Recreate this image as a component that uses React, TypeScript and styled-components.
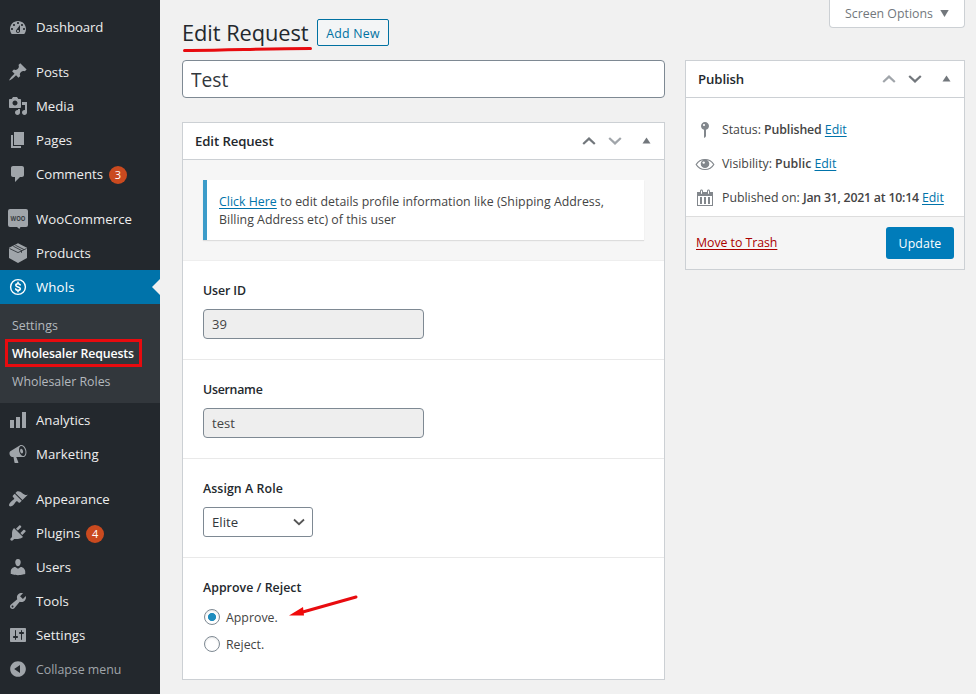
import React, { useState } from 'react';
import styled, { createGlobalStyle, css } from 'styled-components';

const GlobalStyle = createGlobalStyle`
  * { box-sizing: border-box; }
  body {
    margin: 0;
    background: #f1f1f1;
    color: #444;
    font: 12.35px/18px "Open Sans", "Noto Sans", sans-serif;
  }
  input, select, button { font: inherit; color: inherit; margin: 0; }
  a { color: #0073aa; text-decoration: underline; text-underline-offset: 1.5px; }
`;

const Page = styled.div`
  position: relative;
  display: flex;
  width: 976px;
  height: 694px;
  overflow: hidden;
`;

/* ---------- admin menu ---------- */

const Menu = styled.nav`
  width: 160px;
  flex: none;
  padding-top: 10px;
  background: #23282d;
`;

const MenuItem = styled.a<{ $active?: boolean; $gap?: boolean; $muted?: boolean }>`
  display: flex;
  align-items: center;
  height: 34px;
  margin-top: ${(p) => (p.$gap ? 11 : 0)}px;
  padding-left: 8px;
  color: ${(p) => (p.$muted ? '#a0a5aa' : '#eee')};
  background: ${(p) => (p.$active ? '#0073aa' : 'transparent')};
  font-size: ${(p) => (p.$muted ? 12.35 : 13.2)}px;
  text-decoration: none;
  svg {
    flex: none;
    margin-right: 8px;
    fill: ${(p) => (p.$active ? '#fff' : '#a0a5aa')};
  }
  ${(p) =>
    p.$active &&
    css`
      color: #fff;
      &::after {
        content: '';
        margin-left: auto;
        border: 8px solid transparent;
        border-right-color: #f1f1f1;
      }
    `}
`;

const Label = styled.span<{ $spacing?: number; $drop?: number }>`
  padding-top: ${(p) => p.$drop ?? 0}px;
  letter-spacing: ${(p) => p.$spacing ?? 0}px;
`;

const Badge = styled.span`
  width: 18px;
  height: 18px;
  margin: 1px 0 0 6px;
  border-radius: 9px;
  background: #ca4a1f;
  color: #fff;
  font-size: 11px;
  line-height: 18px;
  text-align: center;
`;

const SubMenu = styled.div`
  height: 99px;
  padding: 7px 5px;
  background: #32373c;
`;

const SubItem = styled.a<{ $current?: boolean }>`
  display: flex;
  align-items: center;
  width: 137px;
  height: 28px;
  padding: 2px 0 0 7px;
  color: #b4b9be;
  text-decoration: none;
  white-space: nowrap;
  ${(p) =>
    p.$current &&
    css`
      color: #fff;
      font-weight: 600;
      padding-left: 4px;
      border: 3px solid #e80b0f;
      letter-spacing: -0.13px;
    `}
`;

/* ---------- content ---------- */

const Content = styled.main`
  display: flex;
  flex: 1;
  padding-left: 22px;
`;

const Primary = styled.div`
  width: 483px;
  margin-right: 20px;
`;

const Secondary = styled.aside`
  width: 280px;
`;

const Heading = styled.header`
  display: flex;
  height: 60px;
  padding-top: 19px;
`;

const Title = styled.h1`
  margin: 0 9px 0 0;
  width: 126px;
  color: #23282d;
  font-size: 21.8px;
  font-weight: 400;
  line-height: 28px;
  white-space: nowrap;
  letter-spacing: -0.05px;
`;

const AddNew = styled.button`
  width: 72px;
  height: 27px;
  padding: 2px 0 0;
  border: 1px solid #0071a1;
  border-radius: 2px;
  background: #f3f5f6;
  color: #0071a1;
  font-weight: 500;
  line-height: 23px;
  letter-spacing: 0.2px;
`;

const TitleInput = styled.input`
  display: block;
  width: 100%;
  height: 38px;
  padding: 3px 8px;
  border: 1px solid #7e8993;
  border-radius: 4px;
  background: #fff;
  color: #32373c;
  font-size: 19.2px;
  outline: none;
`;

const Panel = styled.section<{ $top?: number }>`
  margin-top: ${(p) => p.$top ?? 0}px;
  border: 1px solid #ccd0d4;
  background: #fff;
`;

const PanelHead = styled.div`
  display: flex;
  align-items: center;
  height: 37px;
  padding: 0 12px;
  border-bottom: 1px solid #ccd0d4;
`;

const PanelTitle = styled.h2`
  margin: 0 auto 0 0;
  color: #23282d;
  font-size: 13.2px;
  font-weight: 600;
  letter-spacing: -0.1px;
`;

const Notice = styled.div`
  height: 101px;
  padding: 20px;
  border-bottom: 1px solid #eee;
  background: #f6f6f6;
`;

const NoticeCard = styled.p`
  height: 60px;
  margin: 0;
  padding: 13px 0 0 12px;
  border-left: 4px solid #3c9cc9;
  background: #fff;
  box-shadow: 0 1px 1px rgba(0, 0, 0, 0.1);
  white-space: nowrap;
  letter-spacing: 0.02px;
`;

const Field = styled.div<{ $last?: boolean }>`
  height: ${(p) => (p.$last ? 121 : 99)}px;
  padding: 20px;
  border-bottom: ${(p) => (p.$last ? 'none' : '1px solid #e9e9e9')};
`;

const FieldLabel = styled.div<{ $spacing?: number }>`
  height: 28px;
  padding-top: 1px;
  color: #23282d;
  font-weight: 600;
  letter-spacing: ${(p) => p.$spacing ?? 0.02}px;
`;

const ReadOnly = styled.input`
  display: block;
  width: 221px;
  height: 30px;
  padding: 0 8px;
  border: 1px solid #7e8993;
  border-radius: 4px;
  background: #eee;
  color: #444;
  font-size: 13px;
  outline: none;
`;

const SelectBox = styled.button`
  display: flex;
  align-items: center;
  justify-content: space-between;
  width: 110px;
  height: 30px;
  padding: 0 7px 0 8px;
  border: 1px solid #7e8993;
  border-radius: 3px;
  background: #fff;
  color: #32373c;
  font-size: 13.2px;
`;

const Choices = styled.div`
  margin-top: -3px;
`;

const Choice = styled.label`
  display: flex;
  align-items: center;
  height: 27px;
  padding-left: 1px;
`;

const Radio = styled.input`
  appearance: none;
  width: 16px;
  height: 16px;
  margin: 0 6px 0 0;
  border: 1px solid #7e8993;
  border-radius: 50%;
  background: #fff;
  box-shadow: inset 0 1px 2px rgba(0, 0, 0, 0.1);
  &:checked {
    background: radial-gradient(circle, #1e8cbe 0 3.7px, #fff 4.4px);
  }
`;

const ScreenOptions = styled.button`
  display: flex;
  justify-content: space-between;
  width: 136px;
  height: 28px;
  margin: 0 0 32px auto;
  padding: 5px 15px 0;
  border: 1px solid #ccd0d4;
  border-top: 0;
  border-radius: 0 0 4px 4px;
  background: #fff;
  color: #72777c;
  line-height: 18px;
  svg { margin-top: 5px; }
`;

const Details = styled.div`
  height: 118px;
  padding: 15px 9px 0;
`;

const Detail = styled.div`
  display: flex;
  align-items: center;
  height: 34px;
  svg { flex: none; margin-right: 7px; fill: #82878c; }
  b { font-weight: 600; }
`;

const DetailText = styled.span<{ $spacing?: number }>`
  white-space: nowrap;
  letter-spacing: -0.03px;
  b { letter-spacing: ${(p) => p.$spacing ?? -0.12}px; }
`;

const PublishFoot = styled.div`
  display: flex;
  align-items: center;
  justify-content: space-between;
  height: 53px;
  padding: 0 10px;
  border-top: 1px solid #ddd;
  background: #f5f5f5;
`;

const TrashLink = styled.a`
  color: #a00;
  letter-spacing: -0.05px;
`;

const UpdateButton = styled.button`
  width: 68px;
  height: 32px;
  padding: 1px 0 0;
  border: 0;
  border-radius: 3px;
  background: #007cba;
  color: #fff;
  letter-spacing: 0.08px;
`;

const Annotations = styled.svg`
  position: absolute;
  inset: 0;
  pointer-events: none;
`;

/* ---------- icons ---------- */

const paths = {
  dashboard:
    'M3.76 17h12.48c1.1-1.37 1.76-3.11 1.76-5 0-4.42-3.58-8-8-8s-8 3.58-8 8c0 1.89.66 3.63 1.76 5zM10 5c.55 0 1 .45 1 1s-.45 1-1 1-1-.45-1-1 .45-1 1-1zM6 7c.55 0 1 .45 1 1s-.45 1-1 1-1-.45-1-1 .45-1 1-1zm8 0c.55 0 1 .45 1 1s-.45 1-1 1-1-.45-1-1 .45-1 1-1zm-5.37 5.55L12 8v6c0 1.1-.9 2-2 2s-2-.9-2-2c0-.57.24-1.08.63-1.45zM4 11c.55 0 1 .45 1 1s-.45 1-1 1-1-.45-1-1 .45-1 1-1zm12 0c.55 0 1 .45 1 1s-.45 1-1 1-1-.45-1-1 .45-1 1-1zm-5 3c0-.55-.45-1-1-1s-1 .45-1 1 .45 1 1 1 1-.45 1-1z',
  posts:
    'M10.44 3.02l1.82-1.82 6.36 6.35-1.83 1.82c-1.05-.68-2.48-.57-3.41.36l-.75.75c-.92.93-1.04 2.35-.35 3.41l-1.83 1.82-2.41-2.41-2.8 2.79c-.42.42-3.38 2.71-3.8 2.29s1.86-3.39 2.28-3.81l2.79-2.79L4.1 9.36l1.83-1.82c1.05.69 2.48.57 3.4-.36l.75-.75c.93-.92 1.05-2.35.36-3.41z',
  media:
    'M13 11V4c0-.55-.45-1-1-1h-1.67L9 1H5L3.67 3H2c-.55 0-1 .45-1 1v7c0 .55.45 1 1 1h10c.55 0 1-.45 1-1zM7 4.5c1.38 0 2.5 1.12 2.5 2.5S8.38 9.5 7 9.5 4.5 8.38 4.5 7 5.62 4.5 7 4.5zM14 6h5v10.5c0 1.38-1.12 2.5-2.5 2.5S14 17.88 14 16.5s1.12-2.5 2.5-2.5c.17 0 .34.02.5.05V9h-3V6zm-4 8.05V13h2v3.5c0 1.38-1.12 2.5-2.5 2.5S7 17.88 7 16.5 8.12 14 9.5 14c.17 0 .34.02.5.05z',
  pages: 'M6 15V2h10v13H6zm-1 1h8v2H3V5h2v11z',
  comments:
    'M5 2h9c1.1 0 2 .9 2 2v7c0 1.1-.9 2-2 2h-2l-5 5v-5H5c-1.1 0-2-.9-2-2V4c0-1.1.9-2 2-2z',
  analytics: 'M18 18V2h-4v16h4zm-6 0V7H8v11h4zm-6 0v-8H2v8h4z',
  marketing:
    'M18.15 5.94c.46 1.62.38 3.22-.02 4.48-.42 1.28-1.26 2.18-2.3 2.48-.16.06-.26.06-.4.06-.06.02-.12.02-.18.02-.06.02-.14.02-.22.02h-6.8l2.22 5.5c.02.14-.06.26-.14.34-.08.1-.24.16-.34.16H6.95c-.1 0-.26-.06-.34-.16-.08-.08-.16-.2-.14-.34l-1-5.5H4.25l-.02-.02c-.5.06-1.08-.18-1.54-.62s-.88-1.08-1.06-1.88c-.24-.8-.2-1.56-.02-2.2.18-.62.58-1.08 1.06-1.3l.02-.02 9-5.4c.1-.06.18-.1.24-.16.06-.04.14-.08.24-.12.16-.08.28-.12.5-.18 1.04-.3 2.24.1 3.22.98s1.84 2.24 2.26 3.86zm-2.58 5.98h-.02c.4-.1.74-.34 1.04-.7.58-.7.86-1.76.86-3.04 0-.64-.1-1.3-.28-1.98-.34-1.36-1.02-2.5-1.78-3.24s-1.68-1.1-2.46-.88c-.82.22-1.4.96-1.7 2-.32 1.04-.28 2.36.06 3.72.38 1.36 1 2.5 1.8 3.24.78.74 1.62 1.1 2.48.88zm-2.54-7.08c.22-.04.42-.02.62.04.38.16.76.48 1.02 1s.42 1.2.42 1.78c0 .3-.04.56-.12.8-.18.48-.44.84-.86.94-.34.1-.8-.06-1.14-.4s-.64-.86-.78-1.5c-.18-.62-.12-1.24.02-1.72s.48-.84.82-.94z',
  appearance:
    'M14.48 11.06L7.41 3.99l1.5-1.5c.5-.56 2.3-.47 3.51.32 1.21.8 1.43 1.28 2.91 2.1 1.18.64 2.45 1.26 4.45.85zm-.71.71L6.7 4.7 4.93 6.47c-.39.39-.39 1.02 0 1.41l1.06 1.06c.39.39.39 1.03 0 1.42-.6.6-1.43 1.11-2.21 1.69-.35.26-.7.53-1.01.84C1.43 14.23.4 16.08 1.4 17.07c.99 1 2.84-.03 4.18-1.36.31-.31.58-.66.85-1.02.57-.78 1.08-1.61 1.69-2.21.39-.39 1.02-.39 1.41 0l1.06 1.06c.39.39 1.02.39 1.41 0z',
  plugins:
    'M13.11 4.36L9.87 7.6 8 5.73l3.24-3.24c.35-.34 1.05-.2 1.56.32.52.51.66 1.21.31 1.55zm-8 1.77l.91-1.12 9.01 9.01-1.19.84c-.71.71-2.63 1.16-3.82 1.16H6.14L4.9 17.26c-.59.59-1.54.59-2.12 0-.59-.58-.59-1.53 0-2.12l1.24-1.24v-3.88c0-1.13.4-3.19 1.09-3.89zm7.26 3.97l3.24-3.24c.34-.35 1.04-.21 1.55.31.52.51.66 1.21.31 1.55l-3.24 3.25z',
  users:
    'M10 9.25c-2.27 0-2.73-3.44-2.73-3.44C7 4.02 7.82 2 9.97 2c2.16 0 2.98 2.02 2.71 3.81 0 0-.41 3.44-2.68 3.44zm0 2.57L12.72 10c2.39 0 4.52 2.33 4.52 4.53v2.49s-3.65 1.13-7.24 1.13c-3.65 0-7.24-1.13-7.24-1.13v-2.49c0-2.25 1.94-4.48 4.47-4.48z',
  tools:
    'M16.68 9.77c-1.34 1.34-3.3 1.67-4.95.99l-5.41 6.52c-.99.99-2.59.99-3.58 0s-.99-2.59 0-3.57l6.52-5.42c-.68-1.65-.35-3.61.99-4.95 1.28-1.28 3.12-1.62 4.72-1.06l-2.89 2.89 2.82 2.82 2.86-2.87c.53 1.58.18 3.39-1.08 4.65zM3.81 16.21c.4.39 1.04.39 1.43 0 .4-.4.4-1.04 0-1.43-.39-.4-1.03-.4-1.43 0-.39.39-.39 1.03 0 1.43z',
  settings:
    'M18 16V4c0-.55-.45-1-1-1H3c-.55 0-1 .45-1 1v12c0 .55.45 1 1 1h14c.55 0 1-.45 1-1zM8 11h1c.55 0 1 .45 1 1s-.45 1-1 1H8v1.5c0 .28-.22.5-.5.5s-.5-.22-.5-.5V13H6c-.55 0-1-.45-1-1s.45-1 1-1h1V5.5c0-.28.22-.5.5-.5s.5.22.5.5V11zm5-2h-1c-.55 0-1-.45-1-1s.45-1 1-1h1V5.5c0-.28.22-.5.5-.5s.5.22.5.5V7h1c.55 0 1 .45 1 1s-.45 1-1 1h-1v5.5c0 .28-.22.5-.5.5s-.5-.22-.5-.5V9z',
  collapse:
    'M10 2.16c4.33 0 7.84 3.51 7.84 7.84s-3.51 7.84-7.84 7.84S2.16 14.33 2.16 10 5.71 2.16 10 2.16zm2 11.72V6.12L6.18 9.97z',
  pin:
    'M14 6c0 1.86-1.28 3.41-3 3.86V16c0 1-2 2-2 2V9.86c-1.72-.45-3-2-3-3.86 0-2.21 1.79-4 4-4s4 1.79 4 4zM8 5c0 .55.45 1 1 1s1-.45 1-1-.45-1-1-1-1 .45-1 1z',
  calendar:
    'M15 4h3v14H2V4h3V3c0-.83.67-1.5 1.5-1.5S8 2.17 8 3v1h4V3c0-.83.67-1.5 1.5-1.5S15 2.17 15 3v1zM6 3v2.5c0 .28.22.5.5.5s.5-.22.5-.5V3c0-.28-.22-.5-.5-.5S6 2.72 6 3zm7 0v2.5c0 .28.22.5.5.5s.5-.22.5-.5V3c0-.28-.22-.5-.5-.5s-.5.22-.5.5zm4 14V8H3v9h14zM7 16V9H5v7h2zm4 0V9H9v7h2zm4 0V9h-2v7h2z',
};

const Icon = ({ name }: { name: keyof typeof paths }) => (
  <svg width="20" height="20" viewBox="0 0 20 20">
    <path fillRule={name === 'marketing' ? 'evenodd' : 'nonzero'} d={paths[name]} />
  </svg>
);

const WooText = styled.text`
  fill: #3a3f44;
  stroke: none;
  font: 700 6.5px "Open Sans", sans-serif;
`;

const WooIcon = () => (
  <svg width="20" height="20" viewBox="0 0 20 20">
    <path d="M2 0h16a2 2 0 0 1 2 2v14a2 2 0 0 1-2 2h-5.500l-1.200 2-2.300-2H2a2 2 0 0 1-2-2V2a2 2 0 0 1 2-2z" />
    <WooText x="2.500" y="11.500" textLength="15" lengthAdjust="spacingAndGlyphs">WOO</WooText>
  </svg>
);

const ProductsIcon = () => (
  <svg width="20" height="20" viewBox="0 0 20 20">
    <path d="M10 0.300l9 4.500v10.200L10 20l-9-5V4.800z" />
    <g fill="none" stroke="#23282d" strokeWidth="0.800">
      <path d="M1.500 5.500L10 9.600l8.500-4.100" />
      <path d="M5.300 3.200l8.200 4.300v2.300M7.300 2.200l8.600 4.300" />
    </g>
  </svg>
);

const DollarIcon = () => (
  <svg width="20" height="20" viewBox="0 0 20 20">
    <g transform="translate(10 10)" stroke="#fff" strokeLinecap="round">
      <circle r="7.400" fill="none" strokeWidth="1.400" />
      <path
        d="M2.200-2.100C1.800-2.900 1-3.200 0-3.200c-1.400 0-2.200.6-2.200 1.500C-2.200.500 2.300-.500 2.300 1.700 2.300 2.700 1.300 3.200 0 3.200c-1.200 0-2-.4-2.300-1.300M0-4.800v1.600M0 3.200v1.600"
        fill="none"
        strokeWidth="1.600"
      />
    </g>
  </svg>
);

const EyeIcon = () => (
  <svg width="20" height="20" viewBox="0 0 20 20">
    <path d="M1.200 10.500C3 7.400 6 5.500 10 5.500s7 1.900 8.800 5c-1.800 3.100-4.800 5-8.800 5s-7-1.900-8.800-5z" fill="none" stroke="#82878c" strokeWidth="1.200" />
    <circle cx="10" cy="9.800" r="4.300" />
    <circle cx="8.700" cy="8.600" r="1.200" fill="#fff" />
  </svg>
);

const ArrowsWrap = styled.div`
  display: flex;
  align-items: center;
  gap: 12px;
  svg:last-child { margin: -2px 1px 0 8px; }
`;

const Chevron = ({ down, color }: { down?: boolean; color: string }) => (
  <svg width="14" height="10" viewBox="0 0 14 10">
    <path d={down ? 'M1.200 2l5.800 5.400L12.800 2' : 'M1.200 8L7 2.600 12.800 8'} fill="none" stroke={color} strokeWidth="2.200" />
  </svg>
);

const Triangle = ({ down }: { down?: boolean }) => (
  <svg width="9" height="7" viewBox="0 0 9 7">
    <path d={down ? 'M0.300 0h8.400L4.500 7z' : 'M0.500 6.500h8L4.500 0.500z'} fill="#72777c" />
  </svg>
);

const PanelArrows = ({ up, down }: { up: string; down: string }) => (
  <ArrowsWrap>
    <Chevron color={up} />
    <Chevron color={down} down />
    <Triangle />
  </ArrowsWrap>
);

export default function App() {
  const [decision, setDecision] = useState('approve');
  return (
    <Page>
      <GlobalStyle />
      <Menu>
        <MenuItem><Icon name="dashboard" /><Label $spacing={-0.08}>Dashboard</Label></MenuItem>
        <MenuItem $gap><Icon name="posts" />Posts</MenuItem>
        <MenuItem><Icon name="media" />Media</MenuItem>
        <MenuItem><Icon name="pages" />Pages</MenuItem>
        <MenuItem><Icon name="comments" /><Label $spacing={-0.03}>Comments</Label><Badge>3</Badge></MenuItem>
        <MenuItem $gap><WooIcon /><Label $spacing={0.08}>WooCommerce</Label></MenuItem>
        <MenuItem><ProductsIcon />Products</MenuItem>
        <MenuItem $active><DollarIcon /><Label $spacing={0.15}>Whols</Label></MenuItem>
        <SubMenu>
          <SubItem>Settings</SubItem>
          <SubItem $current>Wholesaler Requests</SubItem>
          <SubItem>Wholesaler Roles</SubItem>
        </SubMenu>
        <MenuItem><Icon name="analytics" />Analytics</MenuItem>
        <MenuItem><Icon name="marketing" /><Label $spacing={0.06}>Marketing</Label></MenuItem>
        <MenuItem $gap><Icon name="appearance" />Appearance</MenuItem>
        <MenuItem><Icon name="plugins" />Plugins<Badge>4</Badge></MenuItem>
        <MenuItem><Icon name="users" />Users</MenuItem>
        <MenuItem><Icon name="tools" />Tools</MenuItem>
        <MenuItem><Icon name="settings" /><Label $spacing={0.06}>Settings</Label></MenuItem>
        <MenuItem $muted><Icon name="collapse" /><Label $drop={2}>Collapse menu</Label></MenuItem>
      </Menu>

      <Content>
        <Primary>
          <Heading>
            <Title>Edit Request</Title>
            <AddNew>Add New</AddNew>
          </Heading>
          <TitleInput defaultValue="Test" />
          <Panel $top={24}>
            <PanelHead>
              <PanelTitle>Edit Request</PanelTitle>
              <PanelArrows up="#72777c" down="#a0a5aa" />
            </PanelHead>
            <Notice>
              <NoticeCard>
                <a href="#">Click Here</a> to edit details profile information like (Shipping Address,
                <br />
                Billing Address etc) of this user
              </NoticeCard>
            </Notice>
            <Field>
              <FieldLabel $spacing={-0.1}>User ID</FieldLabel>
              <ReadOnly readOnly value="39" />
            </Field>
            <Field>
              <FieldLabel $spacing={-0.25}>Username</FieldLabel>
              <ReadOnly readOnly value="test" />
            </Field>
            <Field>
              <FieldLabel $spacing={0.08}>Assign A Role</FieldLabel>
              <SelectBox>
                Elite
                <svg width="12" height="8" viewBox="0 0 12 8">
                  <path d="M1 1.500l5 4.700 5-4.700" fill="none" stroke="#555" strokeWidth="1.800" />
                </svg>
              </SelectBox>
            </Field>
            <Field $last>
              <FieldLabel $spacing={0.03}>Approve / Reject</FieldLabel>
              <Choices>
                <Choice>
                  <Radio type="radio" name="decision" checked={decision === 'approve'} onChange={() => setDecision('approve')} />
                  <Label $drop={2}>Approve.</Label>
                </Choice>
                <Choice>
                  <Radio type="radio" name="decision" checked={decision === 'reject'} onChange={() => setDecision('reject')} />
                  <Label $drop={2}>Reject.</Label>
                </Choice>
              </Choices>
            </Field>
          </Panel>
        </Primary>

        <Secondary>
          <ScreenOptions>
            Screen Options
            <Triangle down />
          </ScreenOptions>
          <Panel>
            <PanelHead>
              <PanelTitle>Publish</PanelTitle>
              <PanelArrows up="#a0a5aa" down="#72777c" />
            </PanelHead>
            <Details>
              <Detail>
                <Icon name="pin" />
                <DetailText>Status: <b>Published</b> <a href="#">Edit</a></DetailText>
              </Detail>
              <Detail>
                <EyeIcon />
                <DetailText $spacing={0.02}>Visibility: <b>Public</b> <a href="#">Edit</a></DetailText>
              </Detail>
              <Detail>
                <Icon name="calendar" />
                <DetailText $spacing={-0.24}>Published on: <b>Jan 31, 2021 at 10:14</b> <a href="#">Edit</a></DetailText>
              </Detail>
            </Details>
            <PublishFoot>
              <TrashLink href="#">Move to Trash</TrashLink>
              <UpdateButton>Update</UpdateButton>
            </PublishFoot>
          </Panel>
        </Secondary>
      </Content>

      <Annotations width="976" height="694" viewBox="0 0 976 694">
        <path d="M184.500 50.500C225 50.500 265 48.500 310.500 48.500" fill="none" stroke="#e80b0f" strokeWidth="3" strokeLinecap="round" />
        <path d="M356 597L301 612.500" stroke="#e80b0f" strokeWidth="3" strokeLinecap="round" />
        <path d="M289 615.500l14-8.500 1 8.500z" fill="#f00a0a" />
      </Annotations>
    </Page>
  );
}
